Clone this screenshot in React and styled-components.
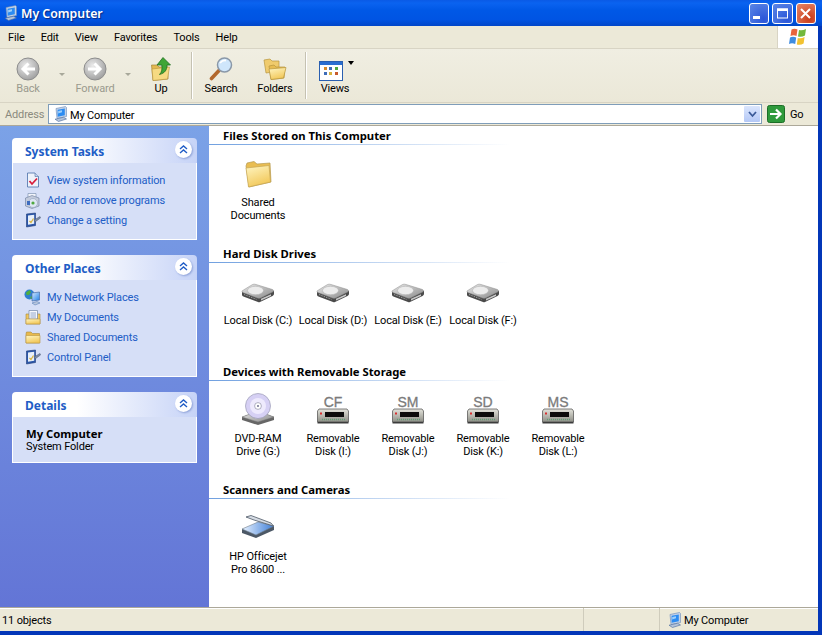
import React from 'react'
import styled, { createGlobalStyle } from 'styled-components'

const GlobalStyle = createGlobalStyle`
    html, body { margin: 0; padding: 0; background: #0054e3; overflow: hidden; }
    body { font-family: Roboto, "Liberation Sans", sans-serif; font-size: 11px; letter-spacing: -0.15px; color: #000; }
    svg { display: block; }
`

const Defs = () => (
    <svg width="0" height="0" style={{ position: 'absolute' }}>
        <defs>
            <linearGradient id="gFolder" x1="0" y1="0" x2="0.4" y2="1">
                <stop offset="0" stopColor="#fff6c4" />
                <stop offset="1" stopColor="#f2c95c" />
            </linearGradient>
            <linearGradient id="gDisk" x1="0" y1="0" x2="1" y2="1">
                <stop offset="0" stopColor="#e8e8e8" />
                <stop offset="1" stopColor="#8a8a8a" />
            </linearGradient>
            <linearGradient id="gBox" x1="0" y1="0" x2="0" y2="1">
                <stop offset="0" stopColor="#e4e4dc" />
                <stop offset="1" stopColor="#8e8e86" />
            </linearGradient>
            <radialGradient id="gNav" cx="0.4" cy="0.35" r="0.75">
                <stop offset="0" stopColor="#ececec" />
                <stop offset="1" stopColor="#979797" />
            </radialGradient>
            <linearGradient id="gMonitor" x1="0" y1="0" x2="1" y2="1">
                <stop offset="0" stopColor="#d8ecff" />
                <stop offset="1" stopColor="#1f7fe8" />
            </linearGradient>
            <linearGradient id="gScan" x1="0" y1="0" x2="1" y2="0">
                <stop offset="0" stopColor="#e8f2ff" />
                <stop offset="1" stopColor="#3f7fd8" />
            </linearGradient>
        </defs>
    </svg>
)

/* Iconos */
const ComputerIcon = ({ size = 16 }) => (
    <svg width={size} height={size} viewBox="0 0 16 16">
        <path d="M3 2.5 L12.5 .5 L13.5 1.5 V10.5 L4 12.5 Z" fill="#c4d2e6" stroke="#6a8ab8" strokeWidth=".6" />
        <path d="M4.6 3.8 L11.8 2.4 V9.2 L4.6 10.8 Z" fill="#2c8cf2" />
        <path d="M5.2 5 L9 4.2 V6.2 L5.2 7.6 Z" fill="#9fd0fb" />
        <path d="M2 13.2 L10.5 11.3 L13.5 13 L5.5 15.5 Z" fill="#b4c4da" stroke="#4a6a9c" strokeWidth=".6" />
    </svg>
)

const FolderIcon = ({ size = 32 }) => (
    <svg width={size} height={size} viewBox="0 0 32 32">
        <path d="M4 8 L5 5 L12 3.5 L15 6 L28 5 L29 24 L7 29 Z" fill="#e9bd52" stroke="#b59a52" strokeWidth=".7" />
        <path d="M4 10 L27 7.5 L28.5 24 L6.5 29 Z" fill="url(#gFolder)" stroke="#c5a655" strokeWidth=".7" />
    </svg>
)

const SmallFolderIcon = () => (
    <svg width="16" height="16" viewBox="0 0 16 16">
        <path d="M1 5 L1.5 3 H6 L7.5 4.5 H14.5 V14 H1 Z" fill="#e8b94c" stroke="#a98a3a" strokeWidth=".6" />
        <path d="M1 6.5 H15 V14 H1 Z" fill="url(#gFolder)" stroke="#b8963f" strokeWidth=".6" />
    </svg>
)

const DocsIcon = () => (
    <svg width="16" height="16" viewBox="0 0 16 16">
        <path d="M1 5 H15 V15 H1 Z" fill="#f1c75d" stroke="#a98a3a" strokeWidth=".6" />
        <path d="M4 1.5 H12.5 V10 H4 Z" fill="#f6f8fc" stroke="#7186a8" strokeWidth=".7" />
        <path d="M5.5 4 H11 M5.5 6 H11 M5.5 8 H11" stroke="#7c93c0" strokeWidth=".8" />
        <path d="M1 10 H15 V15 H1 Z" fill="url(#gFolder)" stroke="#b8963f" strokeWidth=".6" />
    </svg>
)

const NetworkIcon = () => (
    <svg width="17" height="17" viewBox="0 0 17 17">
        <circle cx="5.5" cy="5.5" r="5" fill="#2f7fd0" />
        <path d="M2 3.5 L5.5 1 L7 3 L5 6 L2.5 6 Z M6 8 L9 6.5 L9.5 9 L7 10 Z" fill="#4fae3f" />
        <path d="M8 4 L15.5 3 V11 L8 12 Z" fill="url(#gMonitor)" stroke="#4a6ea8" strokeWidth=".7" />
        <path d="M8 14 L13 12.5 L16 14 L11 16 Z" fill="#b9c7dc" stroke="#5a7fb8" strokeWidth=".6" />
    </svg>
)

const ControlIcon = () => (
    <svg width="16" height="16" viewBox="0 0 16 16">
        <path d="M1.5 2 L10.5 1 V13.5 L1.5 15 Z" fill="#2b56a8" stroke="#1d3a78" strokeWidth=".6" />
        <path d="M3 3.5 L9.2 2.8 V11.8 L3 12.8 Z" fill="#e8f0fa" />
        <path d="M4.5 9 L6 10.5 L8.5 6.5" fill="none" stroke="#d8b23c" strokeWidth="1.2" />
        <path d="M9 8 L15 4.5 L15.5 6 L10 10 Z" fill="#7b8aa4" stroke="#4c5a74" strokeWidth=".5" />
    </svg>
)

const InfoIcon = () => (
    <svg width="16" height="16" viewBox="0 0 16 16">
        <path d="M2.5 1 H10 L13.5 4.5 V15 H2.5 Z" fill="#eef2fa" stroke="#4a6ea8" strokeWidth=".8" />
        <path d="M10 1 V4.5 H13.5" fill="#c6d3ea" stroke="#4a6ea8" strokeWidth=".6" />
        <path d="M4.5 9 L7 12 L12 6.5" fill="none" stroke="#d81e3c" strokeWidth="1.8" />
    </svg>
)

const ProgramsIcon = () => (
    <svg width="17" height="17" viewBox="0 0 17 17">
        <path d="M4 1.5 H12 V6 H4 Z" fill="#f2f4fa" stroke="#7186a8" strokeWidth=".6" />
        <path d="M1.5 6 L8 3.5 L15 6 V14 L8 16.5 L1.5 14 Z" fill="#c3cbdc" stroke="#6a7a98" strokeWidth=".6" />
        <circle cx="9" cy="11" r="4.5" fill="#dfe7f4" stroke="#8595b2" strokeWidth=".5" />
        <circle cx="9" cy="11" r="1.6" fill="#4fa83f" />
        <path d="M3 9 H6 V13 H3 Z" fill="#3d6cc0" />
    </svg>
)

const NavIcon = ({ direction }) => (
    <svg width="24" height="24" viewBox="0 0 24 24">
        <circle cx="12" cy="12" r="11" fill="url(#gNav)" stroke="#8d8d8d" />
        <path
            d={direction === 'back' ? 'M19 12 H8 M12.5 6.5 L7 12 L12.5 17.5' : 'M5 12 H16 M11.5 6.5 L17 12 L11.5 17.5'}
            fill="none" stroke="#fff" strokeWidth="3"
        />
    </svg>
)

const UpIcon = () => (
    <svg width="20" height="24" viewBox="0 0 20 24">
        <path d="M.5 8 H6 L8 10 H17 V22 L2 23.5 Z" fill="#e4b850" stroke="#a5843a" strokeWidth=".7" />
        <path d="M1 12 L18.5 10 L16.5 22 L2 23.5 Z" fill="#f6da82" stroke="#b8963f" strokeWidth=".6" />
        <path d="M12 .5 L19.5 8 H16 C16 13 14 16 8.5 17.5 C11 15 11.3 11.5 10.8 8 H6 Z" fill="#3fa535" stroke="#1f6e1f" strokeWidth=".8" />
    </svg>
)

const SearchIcon = () => (
    <svg width="24" height="24" viewBox="0 0 24 24">
        <path d="M10 13.5 L2.5 21.5" stroke="#b2682c" strokeWidth="3.6" strokeLinecap="round" />
        <circle cx="15.5" cy="8" r="7" fill="#cfe6fb" stroke="#8a98a8" strokeWidth="1.5" />
        <path d="M11 6 Q13.5 3 17 3.5" fill="none" stroke="#fff" strokeWidth="1.8" />
    </svg>
)

const FoldersIcon = () => (
    <svg width="24" height="22" viewBox="0 0 24 22">
        <path d="M1 2 L7 1 L9 3 L16 3 V13 L3 15 Z" fill="#f0cb6c" stroke="#b8963f" strokeWidth=".7" />
        <path d="M6 8 L11 7 L13 9 H22 L21 20 L8 21.5 Z" fill="#e8bc50" stroke="#b8963f" strokeWidth=".7" />
        <path d="M6 11 L23 9.5 L20.5 20 L8 21.5 Z" fill="url(#gFolder)" stroke="#b8963f" strokeWidth=".7" />
    </svg>
)

const ViewsIcon = () => (
    <svg width="24" height="20" viewBox="0 0 24 20">
        <rect x=".5" y=".5" width="23" height="19" fill="#fff" stroke="#2a5fb0" />
        <rect x="1" y="1" width="22" height="3" fill="#2a6ed0" />
        <rect x="5" y="6" width="3" height="3" fill="#d88a2c" />
        <rect x="10" y="6" width="3" height="3" fill="#3e6db8" />
        <rect x="16" y="6" width="3" height="3" fill="#4fa83f" />
        <rect x="5" y="11" width="3" height="3" fill="#3e6db8" />
        <rect x="10" y="11" width="3" height="3" fill="#d8b23c" />
        <rect x="16" y="11" width="3" height="3" fill="#c85a2c" />
    </svg>
)

const XpFlag = () => (
    <svg width="20" height="20" viewBox="0 0 20 20">
        <path d="M3.5 2.5 Q6.5 1 9.5 2.5 L8.5 9 Q5.5 7.5 2.5 9 Z" fill="#e8643c" />
        <path d="M11 3 Q14 4 18 2 L17 8.5 Q13.5 10.5 10 9.5 Z" fill="#72b83c" />
        <path d="M2 10.5 Q5 9 8.2 10.5 L7.2 17 Q4 15.5 1 17 Z" fill="#3f8ce0" />
        <path d="M9.8 11 Q13 12 16.6 10 L15.6 16.5 Q12.5 18.5 8.8 17.5 Z" fill="#f2c230" />
    </svg>
)

const GoIcon = () => (
    <svg width="18" height="18" viewBox="0 0 18 18">
        <rect x=".5" y=".5" width="17" height="17" rx="2" fill="#2f9a3c" stroke="#1d6e28" />
        <path d="M3 9 H13 M9 4.5 L13.5 9 L9 13.5" fill="none" stroke="#fff" strokeWidth="2.2" />
    </svg>
)

const HddIcon = () => (
    <svg width="34" height="25" viewBox="0 0 34 25">
        <path d="M1 8.5 V12 Q1 13 3 13.8 L17 19 Q18 19.4 19 19 L31.5 13 Q33 12 33 11 V8 Z" fill="#4a4a4a" />
        <path d="M1 8.5 Q1 7.5 2.5 7 L11.5 1.5 Q13 .8 15 1.5 L31.5 6.5 Q33.5 7.5 32 8.8 L19.5 15 Q18 15.6 16.5 15 L2.5 9.8 Q1 9.2 1 8.5 Z" fill="url(#gDisk)" stroke="#8c8c8c" strokeWidth=".5" />
        <ellipse cx="14.5" cy="7.5" rx="8" ry="4.2" fill="#ececec" stroke="#adadad" strokeWidth=".5" />
        <path d="M20 15.8 L30 11.2 V13 L20 17.6 Z" fill="#c8c8c8" />
        <path d="M3 11.5 L15.5 16.3" stroke="#9c9c9c" strokeWidth="1" strokeDasharray="1.5 1" />
    </svg>
)

const RemovableIcon = ({ label }) => (
    <svg width="34" height="32" viewBox="0 0 34 32">
        <text x="17" y="13" textAnchor="middle" fontFamily='"Liberation Sans", sans-serif' fontSize="14" letterSpacing="0" stroke="#7b7b7b" strokeWidth=".3" fill="#7b7b7b">{label}</text>
        <path d="M3 15 H31 L32.5 17 V28 H1.5 V17 Z" fill="url(#gBox)" stroke="#4c4c4c" strokeWidth=".7" />
        <path d="M1.5 28 H32.5 V29.5 H1.5 Z" fill="#3c3c3c" />
        <rect x="9" y="18" width="19" height="5" fill="#0c0c0c" />
        <rect x="4" y="18.5" width="2" height="2" fill="#d83030" />
        <path d="M6 25.5 H30" stroke="#5f9f77" strokeWidth="1.4" strokeDasharray="1 1" />
    </svg>
)

const DvdIcon = () => (
    <svg width="34" height="34" viewBox="0 0 34 34">
        <path d="M1 25 L17 19 L33 25 V28 L17 33 L1 28 Z" fill="#666" />
        <path d="M1 25 L17 19 L33 25 L17 30 Z" fill="url(#gDisk)" stroke="#777" strokeWidth=".5" />
        <circle cx="17" cy="14" r="12.5" fill="#d6d0f4" stroke="#9b9bb5" strokeWidth=".7" />
        <circle cx="17" cy="14" r="8" fill="#eeeafd" />
        <circle cx="17" cy="14" r="3.4" fill="#fff" stroke="#8f8fa8" strokeWidth=".7" />
        <circle cx="17" cy="14" r="1" fill="#6f6f90" />
    </svg>
)

const ScannerIcon = () => (
    <svg width="34" height="29" viewBox="0 0 34 29">
        <path d="M1 14 V18 L15 23 L33 15 V11 Z" fill="#4c5866" />
        <path d="M1 14 L17 7 L33 11 L15 20 Z" fill="url(#gScan)" stroke="#6d7c8c" strokeWidth=".6" />
        <path d="M5 2 L10 .5 L30 8 L32.5 11 L13 5 Z" fill="#d6dce4" stroke="#4c5866" strokeWidth=".8" />
    </svg>
)

/* Barra de titulo */
const Window = styled.div`
    width: 822px;
    height: 635px;
    box-sizing: border-box;
    border-right: 4px solid #0336b8;
    border-bottom: 4px solid #0336b8;
    display: flex;
    flex-direction: column;
    background: #ece9d8;
`

const TitleBar = styled.div`
    height: 26px;
    margin-right: -4px;
    flex: none;
    display: flex;
    align-items: center;
    padding: 0 6px 0 3px;
    gap: 2px;
    background: linear-gradient(#0a5ae6 0%, #0a63f0 12%, #0058e6 40%, #0054e3 75%, #0146c8 100%);
`

const TitleText = styled.div`
    flex: 1;
    color: #fff;
    font-family: "Noto Sans", sans-serif;
    font-size: 12.3px;
    font-weight: 600;
    letter-spacing: 0;
    text-shadow: 1px 1px 1px #0a2a80;
`

const WinButton = styled.div`
    width: 20.5px;
    height: 21px;
    margin-left: 1px;
    box-sizing: border-box;
    border: 1px solid #fff;
    border-radius: 3px;
    display: flex;
    align-items: center;
    justify-content: center;
    background: ${p => p.$close
        ? 'radial-gradient(circle at 70% 75%, #c83a18, #e8896a)'
        : 'radial-gradient(circle at 75% 80%, #2a55d8, #5c86e6)'};
`

/* Menu */
const MenuBar = styled.div`
    height: 23px;
    flex: none;
    display: flex;
    align-items: center;
    justify-content: space-between;
    border-bottom: 1px solid #d8d4c4;
    box-sizing: border-box;
`

const MenuItems = styled.div`
    display: flex;
    padding-left: 2px;
`

const MenuItem = styled.span`
    padding: 0 6px;
    margin-right: 4px;
`

const FlagBox = styled.div`
    width: 40px;
    height: 22px;
    background: #fff;
    border-left: 1px solid #d8d4c4;
    display: flex;
    align-items: center;
    justify-content: center;
`

/* Barra de herramientas */
const Toolbar = styled.div`
    height: 54px;
    flex: none;
    display: flex;
    box-sizing: border-box;
    padding-top: 3px;
    line-height: 13px;
    border-bottom: 1px solid #d8d4c4;
    background: linear-gradient(#f0eee2, #ebe8d8);
`

const ToolButton = styled.div`
    width: ${p => p.$w}px;
    display: flex;
    flex-direction: column;
    align-items: center;
    color: ${p => p.$disabled ? '#9a9a8e' : '#000'};
`

const ToolIcon = styled.div`
    height: 28px;
    display: flex;
    align-items: center;
    justify-content: center;
    margin-top: 3px;
    margin-bottom: -1px;
`

const DropArrow = styled.div`
    width: ${p => p.$w}px;
    display: flex;
    justify-content: center;
    padding-top: 21px;
    &::before {
        content: '';
        border: 3px solid transparent;
        border-top-color: #a8a89a;
        height: 0;
    }
`

const ToolSep = styled.div`
    width: 1px;
    height: 47px;
    margin-left: ${p => p.$left}px;
    background: #c5c2b2;
    box-shadow: 1px 0 0 #fff;
`

const ViewsIconBox = styled.div`
    position: relative;
    margin: 3px 0 0 -8px;
    &::after {
        content: '';
        position: absolute;
        top: 0;
        right: -11px;
        border: 3px solid transparent;
        border-top: 4px solid #000;
    }
`

/* Barra de direccion */
const AddressBar = styled.div`
    height: 23px;
    flex: none;
    display: flex;
    align-items: center;
    padding-left: 5px;
    box-sizing: border-box;
    border-bottom: 1px solid #aca899;
`

const AddressLabel = styled.span`
    width: 43px;
    color: #8a8a7e;
`

const AddressInput = styled.div`
    width: 714px;
    height: 20px;
    box-sizing: border-box;
    background: #fff;
    border: 1px solid #7f9db9;
    display: flex;
    align-items: center;
    gap: 1px;
    padding-left: 4px;
`

const AddressText = styled.span`
    flex: 1;
    padding-top: 2px;
`

const ComboArrow = styled.div`
    width: 16px;
    height: 16px;
    margin-right: 1px;
    border-radius: 1px;
    background: linear-gradient(#dbe6fd, #b4c8f6);
    display: flex;
    align-items: center;
    justify-content: center;
`

const GoButton = styled.div`
    display: flex;
    align-items: center;
    gap: 5px;
    margin-left: 5px;
`

/* Cuerpo */
const Body = styled.div`
    flex: 1;
    display: flex;
    min-height: 0;
`

const Sidebar = styled.div`
    width: 209px;
    flex: none;
    box-sizing: border-box;
    padding: 12px 12px 0;
    display: flex;
    flex-direction: column;
    gap: 15px;
    background: linear-gradient(#7ba2e7, #6375d6);
`

const TaskHeader = styled.div`
    height: 25px;
    box-sizing: border-box;
    padding: 1px 5px 0 13px;
    display: flex;
    align-items: center;
    justify-content: space-between;
    border-radius: 4px 4px 0 0;
    background: linear-gradient(90deg, #fff 0%, #fff 35%, #c6d3f7 100%);
`

const TaskTitle = styled.span`
    font-family: "Noto Sans", sans-serif;
    font-size: 12px;
    font-weight: 700;
    letter-spacing: 0;
    color: #215dc6;
`

const Chevron = styled.div`
    width: 17px;
    height: 17px;
    margin-top: -4px;
    border-radius: 50%;
    background: #fff;
    box-shadow: 1px 1px 2px #8ea2d8;
    display: flex;
    align-items: center;
    justify-content: center;
`

const TaskBody = styled.div`
    padding: ${p => p.$details ? '10px 13px 9px' : '7px 11px 9px'};
    background: #d6dff7;
    border: 1px solid #fff;
    border-top: none;
`

const TaskRow = styled.div`
    height: 20px;
    display: flex;
    align-items: center;
    gap: 6px;
    white-space: nowrap;
    color: #215dc6;
`

const RowIcon = styled.div`
    width: 17px;
    height: 17px;
    display: flex;
    align-items: center;
    justify-content: center;
`

const DetailName = styled.div`
    font-family: "Noto Sans", sans-serif;
    font-size: 11.3px;
    font-weight: 700;
    letter-spacing: 0;
    line-height: 13px;
`

const DetailKind = styled.div`
    padding-top: 1px;
    line-height: 12px;
`

const Content = styled.div`
    flex: 1;
    background: #fff;
    padding-top: 2px;
`

const Section = styled.div`
    height: 118px;
`

const SectionTitle = styled.div`
    height: 17px;
    box-sizing: border-box;
    padding: 1px 0 0 14px;
    line-height: 14px;
    font-family: "Noto Sans", sans-serif;
    font-size: 11.3px;
    font-weight: 700;
    letter-spacing: 0;
    width: 300px;
    border-bottom: 1px solid;
    border-image: linear-gradient(90deg, #70a0e0, #fff) 1;
`

const Items = styled.div`
    display: flex;
    padding: 9px 0 0 11.5px;
`

const Item = styled.div`
    width: 75px;
    display: flex;
    flex-direction: column;
    align-items: center;
    text-align: center;
    line-height: 13px;
    white-space: nowrap;
`

const ItemIcon = styled.div`
    height: 36px;
    margin-bottom: 6px;
    display: flex;
    align-items: flex-end;
    justify-content: center;
`

/* Barra de estado */
const StatusBar = styled.div`
    height: 24px;
    flex: none;
    display: flex;
    align-items: center;
    box-sizing: border-box;
    border-top: 1px solid #aca899;
    box-shadow: inset 0 1px 0 #fff;
`

const StatusCell = styled.div`
    width: ${p => p.$w}px;
    height: 100%;
    box-sizing: border-box;
    display: flex;
    align-items: center;
    gap: 1px;
    padding: 1px 0 0 ${p => p.$pad || 0}px;
    border-right: ${p => p.$line ? '1px solid #cfccbc' : 'none'};
`

const tasks = [
    {
        title: 'System Tasks',
        rows: [
            [<InfoIcon key="i" />, 'View system information'],
            [<ProgramsIcon key="i" />, 'Add or remove programs'],
            [<ControlIcon key="i" />, 'Change a setting'],
        ],
    },
    {
        title: 'Other Places',
        rows: [
            [<NetworkIcon key="i" />, 'My Network Places'],
            [<DocsIcon key="i" />, 'My Documents'],
            [<SmallFolderIcon key="i" />, 'Shared Documents'],
            [<ControlIcon key="i" />, 'Control Panel'],
        ],
    },
]

const sections = [
    { title: 'Files Stored on This Computer', items: [[<FolderIcon key="i" />, ['Shared', 'Documents']]] },
    {
        title: 'Hard Disk Drives',
        items: ['C', 'D', 'E', 'F'].map(l => [<HddIcon key="i" />, [`Local Disk (${l}:)`]]),
    },
    {
        title: 'Devices with Removable Storage',
        items: [
            [<DvdIcon key="i" />, ['DVD-RAM', 'Drive (G:)']],
            [<RemovableIcon key="i" label="CF" />, ['Removable', 'Disk (I:)']],
            [<RemovableIcon key="i" label="SM" />, ['Removable', 'Disk (J:)']],
            [<RemovableIcon key="i" label="SD" />, ['Removable', 'Disk (K:)']],
            [<RemovableIcon key="i" label="MS" />, ['Removable', 'Disk (L:)']],
        ],
    },
    { title: 'Scanners and Cameras', items: [[<ScannerIcon key="i" />, ['HP Officejet', 'Pro 8600 ...']]] },
]

const ChevronUp = () => (
    <svg width="9" height="9" viewBox="0 0 9 9">
        <path d="M1 4 L4.5 1 L8 4 M1 8 L4.5 5 L8 8" fill="none" stroke="#215dc6" strokeWidth="1.4" />
    </svg>
)

const App = () => {
    return (
        <Window>
            <GlobalStyle />
            <Defs />
            <TitleBar>
                <ComputerIcon />
                <TitleText>My Computer</TitleText>
                <WinButton>
                    <svg width="13" height="13" viewBox="0 0 13 13"><rect x="1" y="9" width="7" height="3" fill="#fff" /></svg>
                </WinButton>
                <WinButton>
                    <svg width="13" height="13" viewBox="0 0 13 13"><rect x="1.5" y="2" width="10" height="9" fill="none" stroke="#fff" /><rect x="1" y="1.5" width="11" height="2.5" fill="#fff" /></svg>
                </WinButton>
                <WinButton $close>
                    <svg width="13" height="13" viewBox="0 0 13 13"><path d="M2 2 L11 11 M11 2 L2 11" stroke="#fff" strokeWidth="2" /></svg>
                </WinButton>
            </TitleBar>

            <MenuBar>
                <MenuItems>
                    {['File', 'Edit', 'View', 'Favorites', 'Tools', 'Help'].map(m => <MenuItem key={m}>{m}</MenuItem>)}
                </MenuItems>
                <FlagBox><XpFlag /></FlagBox>
            </MenuBar>

            <Toolbar>
                <ToolButton $w={56} $disabled><ToolIcon><NavIcon direction="back" /></ToolIcon>Back</ToolButton>
                <DropArrow $w={11} />
                <ToolButton $w={56} $disabled><ToolIcon><NavIcon direction="forward" /></ToolIcon>Forward</ToolButton>
                <DropArrow $w={10} />
                <ToolButton $w={56}><ToolIcon><UpIcon /></ToolIcon>Up</ToolButton>
                <ToolSep $left={2} />
                <ToolButton $w={58}><ToolIcon><SearchIcon /></ToolIcon>Search</ToolButton>
                <ToolButton $w={50}><ToolIcon><FoldersIcon /></ToolIcon>Folders</ToolButton>
                <ToolSep $left={5} />
                <ToolButton $w={58}>
                    <ToolIcon><ViewsIconBox><ViewsIcon /></ViewsIconBox></ToolIcon>
                    Views
                </ToolButton>
            </Toolbar>

            <AddressBar>
                <AddressLabel>Address</AddressLabel>
                <AddressInput>
                    <ComputerIcon />
                    <AddressText>My Computer</AddressText>
                    <ComboArrow>
                        <svg width="9" height="7" viewBox="0 0 9 7"><path d="M1 1 L4.5 5 L8 1" fill="none" stroke="#3a5a98" strokeWidth="1.8" /></svg>
                    </ComboArrow>
                </AddressInput>
                <GoButton><GoIcon />Go</GoButton>
            </AddressBar>

            <Body>
                <Sidebar>
                    {tasks.map(t => (
                        <div key={t.title}>
                            <TaskHeader>
                                <TaskTitle>{t.title}</TaskTitle>
                                <Chevron><ChevronUp /></Chevron>
                            </TaskHeader>
                            <TaskBody>
                                {t.rows.map(([icon, text]) => (
                                    <TaskRow key={text}><RowIcon>{icon}</RowIcon>{text}</TaskRow>
                                ))}
                            </TaskBody>
                        </div>
                    ))}
                    <div>
                        <TaskHeader>
                            <TaskTitle>Details</TaskTitle>
                            <Chevron><ChevronUp /></Chevron>
                        </TaskHeader>
                        <TaskBody $details>
                            <DetailName>My Computer</DetailName>
                            <DetailKind>System Folder</DetailKind>
                        </TaskBody>
                    </div>
                </Sidebar>

                <Content>
                    {sections.map(s => (
                        <Section key={s.title}>
                            <SectionTitle>{s.title}</SectionTitle>
                            <Items>
                                {s.items.map(([icon, lines]) => (
                                    <Item key={lines.join()}>
                                        <ItemIcon>{icon}</ItemIcon>
                                        {lines.map(l => <div key={l}>{l}</div>)}
                                    </Item>
                                ))}
                            </Items>
                        </Section>
                    ))}
                </Content>
            </Body>

            <StatusBar>
                <StatusCell $w={584} $pad={2} $line>11 objects</StatusCell>
                <StatusCell $w={76} $line />
                <StatusCell $w={158} $pad={7}><ComputerIcon />My Computer</StatusCell>
            </StatusBar>
        </Window>
    )
}

export default App
